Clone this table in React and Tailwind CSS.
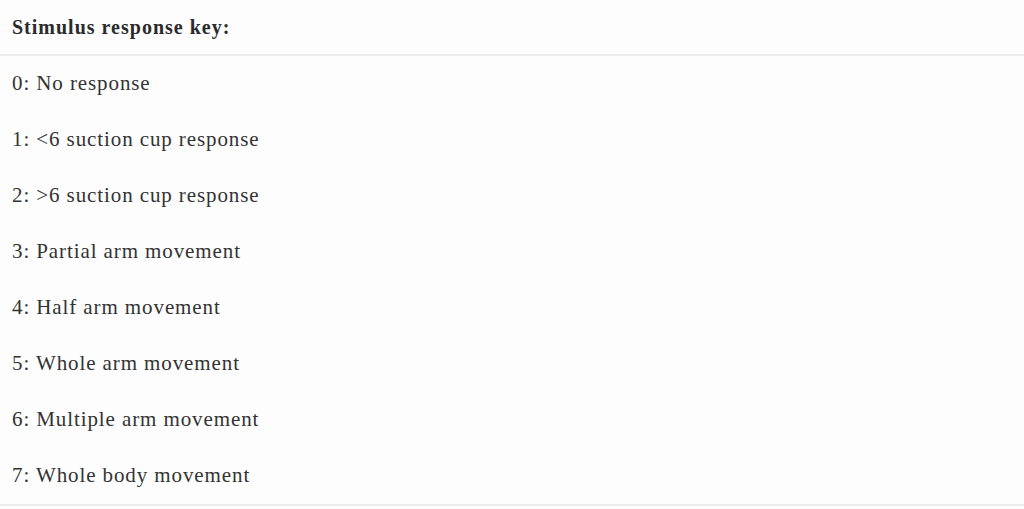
const rows = [
  "0: No response",
  "1: <6 suction cup response",
  "2: >6 suction cup response",
  "3: Partial arm movement",
  "4: Half arm movement",
  "5: Whole arm movement",
  "6: Multiple arm movement",
  "7: Whole body movement",
];

export default function App() {
  return (
    <div className="min-h-screen w-full bg-[#fdfdfd] font-['Liberation_Serif',serif] text-[#333333]">
      <div className="border-b-2 border-[#ececec]">
        <div className="flex h-[56px] items-center border-b-2 border-[#ececec] px-3 text-[20px] font-bold tracking-[1px] text-[#2b2b2b]">
          Stimulus response key:
        </div>
        {rows.map((r) => (
          <div
            key={r}
            className="flex h-[56px] items-center px-3 text-[21px] tracking-[0.9px]"
          >
            {r}
          </div>
        ))}
      </div>
    </div>
  );
}
